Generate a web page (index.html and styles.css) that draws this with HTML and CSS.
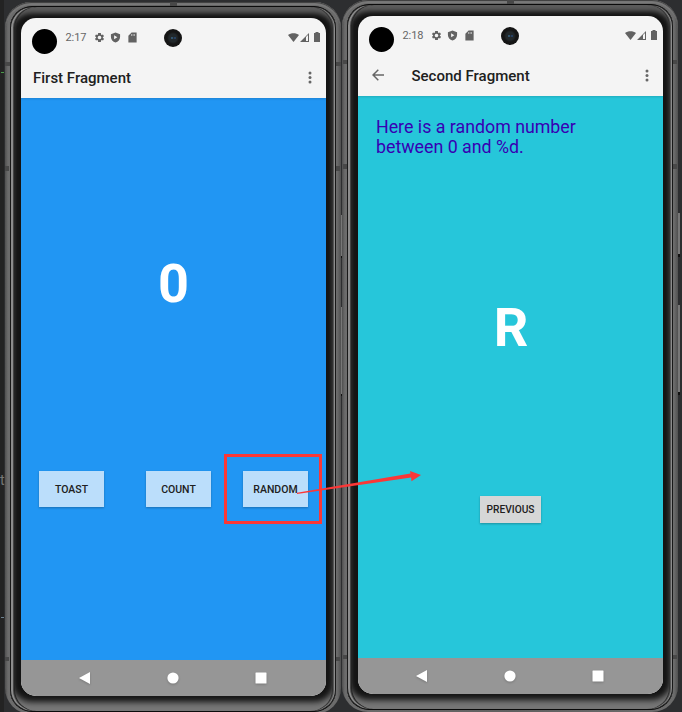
FILE: index.html
```html
<!DOCTYPE html>
<html lang="en">
<head>
<meta charset="utf-8">
<title>Fragments</title>
<link rel="stylesheet" href="styles.css">
</head>
<body>
<svg class="defs" width="0" height="0" aria-hidden="true">
  <symbol id="gear" viewBox="0 0 24 24"><path fill-rule="evenodd" d="M19.4 13c.1-.7.1-1.300 0-2l2.600-1.600-2.500-4-2.500 1a8 8 0 0 0-1.700-1L15 2H9l-.4 3.400a8 8 0 0 0-1.700 1l-2.500-1-2.500 4L4.500 11v2l-2.600 1.600 2.500 4 2.500-1a8 8 0 0 0 1.700 1L9 22h6l.4-3.400a8 8 0 0 0 1.700-1l2.500 1 2.500-4zM12 8a4 4 0 1 1 0 8 4 4 0 0 1 0-8z"/></symbol>
  <symbol id="shield" viewBox="0 0 24 24"><path fill-rule="evenodd" d="M12 1 2 5v6c0 5.500 4 10.700 10 12 6-1.300 10-6.500 10-12V5zM9 7l7 4.500L9 16z"/></symbol>
  <symbol id="card" viewBox="0 0 24 24"><path d="M21 1H10L3 8v15h18zM9 5h1.500v3H9zm3.500 0H14v3h-1.500zM16 5h1.500v3H16z" fill-rule="evenodd"/></symbol>
  <symbol id="wifi" viewBox="0 0 11 9"><path d="M0 2C3-.5 8-.5 11 2L5.500 9z"/></symbol>
  <symbol id="signal" viewBox="0 0 9 9"><path d="M0 9 9 0v9zM6 4v4h2V2z" fill-rule="evenodd"/></symbol>
  <symbol id="battery" viewBox="0 0 6 10"><path d="M1.500 0h3v1H6v9H0V1h1.500z"/></symbol>
  <symbol id="more" viewBox="0 0 4 14"><circle cx="2" cy="2" r="1.500"/><circle cx="2" cy="6.500" r="1.500"/><circle cx="2" cy="11" r="1.500"/></symbol>
</svg>

<main class="stage">
  <section class="phone first">
    <div class="rim"><div class="screen">
      <div class="status">
        <i class="punch"></i><span class="time">2:17</span>
        <svg class="ic"><use href="#gear"/></svg><svg class="ic"><use href="#shield"/></svg><svg class="ic"><use href="#card"/></svg>
        <i class="camera"></i>
        <span class="system"><svg class="wifi"><use href="#wifi"/></svg><svg class="signal"><use href="#signal"/></svg><svg class="battery"><use href="#battery"/></svg></span>
      </div>
      <header class="bar"><h1>First Fragment</h1><svg class="more"><use href="#more"/></svg></header>
      <div class="content blue">
        <div class="value">0</div>
        <div class="buttons"><button>TOAST</button><button>COUNT</button><button>RANDOM</button></div>
      </div>
      <nav class="nav">
        <svg viewBox="0 0 12 12"><path d="M0 6 11 0v12z"/></svg>
        <svg viewBox="0 0 12 12"><circle cx="6" cy="6" r="5.600"/></svg>
        <svg viewBox="0 0 12 12"><rect x=".5" y=".5" width="11" height="11" rx=".5"/></svg>
      </nav>
    </div></div>
  </section>

  <section class="phone second">
    <div class="rim"><div class="screen">
      <div class="status">
        <i class="punch"></i><span class="time">2:18</span>
        <svg class="ic"><use href="#gear"/></svg><svg class="ic"><use href="#shield"/></svg><svg class="ic"><use href="#card"/></svg>
        <i class="camera"></i>
        <span class="system"><svg class="wifi"><use href="#wifi"/></svg><svg class="signal"><use href="#signal"/></svg><svg class="battery"><use href="#battery"/></svg></span>
      </div>
      <header class="bar">
        <svg class="back" viewBox="0 0 12 12"><path d="M12 6H1.200M6.300.7 1 6l5.300 5.300"/></svg>
        <h1>Second Fragment</h1><svg class="more"><use href="#more"/></svg>
      </header>
      <div class="content cyan">
        <p class="message">Here is a random number<br>between 0 and %d.</p>
        <div class="value">R</div>
        <button class="previous">PREVIOUS</button>
      </div>
      <nav class="nav">
        <svg viewBox="0 0 12 12"><path d="M0 6 11 0v12z"/></svg>
        <svg viewBox="0 0 12 12"><circle cx="6" cy="6" r="5.600"/></svg>
        <svg viewBox="0 0 12 12"><rect x=".5" y=".5" width="11" height="11" rx=".5"/></svg>
      </nav>
    </div></div>
  </section>

  <svg class="annotation" viewBox="0 0 682 712">
    <g fill="#484848"><path d="M170 2h7v4h-7zM507 0h7v4h-7zM5 62h5v4H5zM336 62h5v4h-5zM343 60h4v4h-4zM673 60h4v4h-4zM5 166h4v5H5zM336 166h4v5h-4zM343 164h4v5h-4zM673 164h4v5h-4zM5 657h4v4H5zM336 657h4v4h-4zM343 655h4v4h-4zM673 655h4v4h-4z"/></g>
    <path fill="#777" d="M341 215h1v41h-1zM341 307h1v87h-1zM678 213h2v41h-2zM678 305h2v87h-2z"/>
    <path fill="#111" d="M341 256h1v2h-1zM341 394h1v2h-1zM678 254h2v3h-2zM678 392h2v3h-2z"/>
    <rect x="225.500" y="455.500" width="95" height="67" fill="none" stroke="#fb3737" stroke-width="3"/>
    <path fill="#fb3737" d="M297 492.800 410.500 473.600 410 471l11 4-9.500 6.200-.4-3.800L297 494z"/>
  </svg>
  <span class="editor-text">t</span>
  <i class="mark green"></i><i class="mark slate"></i>
</main>
</body>
</html>
```
FILE: styles.css
```css
* { box-sizing: border-box; }
body { margin: 0; background: #2d2e30; font-family: Roboto, "Liberation Sans", sans-serif; overflow: hidden; }
.defs { position: absolute; }
.stage { position: relative; width: 682px; height: 712px; display: flex; padding-left: 5px; gap: 1px; overflow: hidden;
  background: linear-gradient(90deg, #232323 0 4px, #2d2e30 4px); }
.phone { flex: none; width: 336px; height: 712px; padding: 4px 5px 2px 5px; border-radius: 26px;
  background: linear-gradient(90deg, #505050, #6c6c6c 3px, #606060 50%, #6c6c6c 332px, #505050);
  box-shadow: inset 0 1px 1px #3c3c3c, inset 0 3px 1px #7c7c7c; }
.first { margin-top: 2px; }
.rim { height: 100%; padding: 11px 10px 15px 11px; border-radius: 22px; border: solid #0b0b0b; border-width: 1px 0; background: #141414;
  box-shadow: inset 1px 0 #181818, inset -1px 0 #181818, inset 3px 0 #8c8c8c, inset -2px 0 #8c8c8c, inset 4px 0 #444, inset -3px 0 #555, inset 5px 0 #242424, inset -4px 0 #303030, inset 0 6px 5px #5c5c5c, inset 0 -9px 6px #777, inset 0 0 7px 3px #3a3a3a; }
.screen { height: 678px; width: 305px; border-radius: 15px; overflow: hidden; display: flex; flex-direction: column; background: #f4f4f4; }
.status { height: 40px; flex: none; display: flex; align-items: center; padding-left: 11px; fill: #626262; }
.punch { width: 25px; height: 25px; border-radius: 50%; background: #000; margin: 7px 8.500px 0 0; }
.time { font-size: 11px; width: 28px; color: #666; letter-spacing: -.1px; line-height: 38px; }
.ic { width: 11px; height: 11px; margin: -1px 5.500px 0 0; }
.camera { width: 18px; height: 18px; margin-left: 20.500px; border-radius: 50%; background: radial-gradient(circle at 45% 50%, #31546d 0 1px, transparent 1.500px), radial-gradient(circle at 60% 50%, #263f61 0 1px, transparent 1.500px), radial-gradient(circle, #22282b 0 4px, #151515 6px); }
.system { display: flex; align-items: center; margin: -2px 6px 0 auto; }
.wifi { width: 11px; height: 9px; margin-right: 1px; }
.signal { width: 9px; height: 9px; margin-right: 5px; }
.battery { width: 6px; height: 10px; }
.bar { height: 40px; flex: none; display: flex; align-items: center; padding: 0 14px 0 12px; position: relative; z-index: 1; background: #f4f4f4; box-shadow: 0 1px 2px #0002; clip-path: inset(0 0 -4px); }
h1 { margin: 0; font-size: 15px; font-weight: 500; color: #202020; }
.more { width: 4px; height: 14px; fill: #666; margin: 0 0 0 auto; }
.back { width: 12px; height: 12px; margin: -2px 27.500px 0 2px; fill: none; stroke: #666; stroke-width: 1.500; }
.content { flex: 1; display: flex; flex-direction: column; }
.blue { background: #2196f3; }
.cyan { background: #26c6da; }
.value { color: #fff; text-align: center; font-size: 54px; font-weight: 700; line-height: 64px; }
.blue .value { margin-top: 154px; }
.cyan .value { margin-top: 139px; padding-left: 1px; }
.buttons { display: flex; margin: 155px 18px 0; }
.buttons button:nth-child(2) { margin: 0 32px 0 42px; }
button { font: 500 10.500px/1 Roboto, sans-serif; border: 0; width: 65px; height: 36px; padding: 2px 0 0; background: #bbdefb; color: #202020; box-shadow: 0 1px 2px #0004; }
.message { margin: 21px 18px 0; color: #3700b3; font-size: 17.800px; line-height: 20px; }
.previous { width: 61px; height: 27px; font-size: 10.200px; margin: 136px auto 0 122px; background: #d6d7d7; }
.nav { height: 36px; flex: none; display: flex; gap: 76px; align-items: center; padding-left: 58px; background: #969696; fill: #fff; }
.nav svg { width: 12px; height: 12px; filter: drop-shadow(0 1px 1px #0003); }
.annotation { position: absolute; inset: 0; width: 682px; height: 712px; }
.editor-text { position: absolute; left: 0; top: 472px; color: #777; font-size: 14px; }
.mark { position: absolute; left: 1px; width: 3px; height: 1px; }
.green { top: 72px; background: #4a9a4a; }
.slate { top: 617px; background: #6d8190; }
```
